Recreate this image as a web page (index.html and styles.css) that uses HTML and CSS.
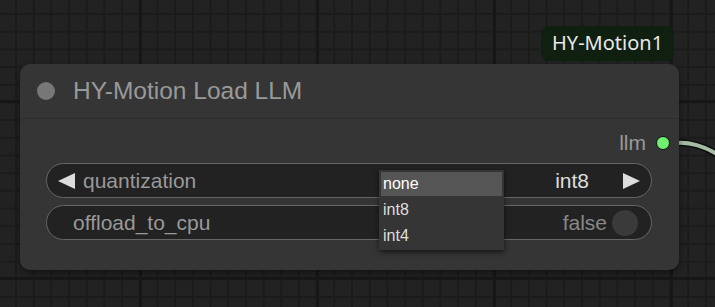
FILE: index.html
```html
<!DOCTYPE html>
<html lang="en">
<head>
    <meta charset="UTF-8">
    <title>HY-Motion Load LLM</title>
    <link rel="stylesheet" href="styles.css">
</head>
<body>

    <div class="canvas">
        <svg class="wire" width="40" height="30" viewBox="0 0 40 30">
            <path d="M0 5 C 14 4, 26 8, 40 16" stroke="#0c0c0c" stroke-width="7" fill="none"/>
            <path d="M0 5 C 14 4, 26 8, 40 16" stroke="#a3bca3" stroke-width="4" fill="none"/>
        </svg>

        <div class="badge">HY-Motion1</div>

        <div class="node">
            <div class="node-title">
                <span class="title-dot"></span>
                <span class="title-text">HY-Motion Load LLM</span>
            </div>
            <div class="node-body">
                <div class="output-row">
                    <span class="output-name">llm</span>
                    <span class="output-dot"></span>
                </div>

                <div class="widget">
                    <span class="arrow arrow-left"></span>
                    <span class="widget-label">quantization</span>
                    <span class="widget-value">int8</span>
                    <span class="arrow arrow-right"></span>
                </div>

                <div class="widget widget-toggle">
                    <span class="widget-label">offload_to_cpu</span>
                    <span class="toggle-value">false</span>
                    <span class="toggle-knob"></span>
                </div>
            </div>
        </div>

        <div class="menu">
            <div class="menu-item active">none</div>
            <div class="menu-item">int8</div>
            <div class="menu-item">int4</div>
        </div>
    </div>

</body>
</html>
```

FILE: styles.css
```css
body {
    margin: 0;
    padding: 0;
    background-color: #222;
    font-family: 'Liberation Sans', Arial, sans-serif;
    overflow: hidden;
}
.canvas {
    position: relative;
    width: 715px;
    height: 307px;
    background-color: #222;
    background-image:
        linear-gradient(90deg, #171717 3px, transparent 3px),
        linear-gradient(0deg, #171717 3px, transparent 3px),
        linear-gradient(90deg, #1b1b1b 2px, transparent 2px),
        linear-gradient(0deg, #1b1b1b 2px, transparent 2px);
    background-size: 177px 177px, 177px 177px, 17.7px 17.7px, 17.7px 17.7px;
    background-position: 139px 0, 0 103px, 15px 0, 0 15px;
}
.wire {
    position: absolute;
    left: 677px;
    top: 138px;
}
.badge {
    position: absolute;
    left: 541px;
    top: 26px;
    height: 35px;
    line-height: 34px;
    padding: 0 11px;
    border-radius: 8px;
    background: #0f1f10;
    color: #e8e8e8;
    font-family: 'Noto Sans', sans-serif;
    font-size: 20px;
}
.node {
    position: absolute;
    left: 20px;
    top: 64px;
    width: 659px;
    height: 206px;
    background: #353535;
    border-radius: 10px;
    box-shadow: 0 3px 6px rgba(0,0,0,0.45);
}
.node-title {
    display: flex;
    align-items: center;
    height: 54px;
    padding-left: 17px;
    border-bottom: 1px solid #2c2c2c;
}
.title-dot {
    width: 18px;
    height: 18px;
    border-radius: 50%;
    background: #777;
    margin-right: 18px;
}
.title-text {
    color: #999;
    font-size: 24.5px;
}
.node-body {
    padding: 12px 27px 0 26px;
}
.output-row {
    display: flex;
    justify-content: flex-end;
    align-items: center;
    height: 24px;
    margin-right: -18px;
    margin-bottom: 8px;
}
.output-name {
    color: #999;
    font-size: 21px;
    margin-right: 10px;
}
.output-dot {
    width: 12px;
    height: 12px;
    border-radius: 50%;
    background: #70f070;
    border: 1.5px solid #111;
}
.widget {
    display: flex;
    align-items: center;
    height: 33px;
    margin-bottom: 7px;
    padding: 0 11px;
    background: #222;
    border: 1.5px solid #666;
    border-radius: 18px;
    font-size: 21px;
}
.widget-label {
    color: #999;
    flex: 1;
}
.widget-value {
    color: #ddd;
    margin-right: 34px;
}
.arrow {
    width: 0;
    height: 0;
    border-top: 8.5px solid transparent;
    border-bottom: 8.5px solid transparent;
}
.arrow-left {
    border-right: 17px solid #ddd;
    margin-right: 8px;
}
.arrow-right {
    border-left: 17px solid #ddd;
}
.widget-toggle {
    padding: 0 13px 0 26px;
}
.toggle-value {
    color: #888;
    margin-right: 5px;
}
.toggle-knob {
    width: 26px;
    height: 26px;
    border-radius: 50%;
    background: #3a3a3a;
}
.menu {
    position: absolute;
    left: 379px;
    top: 170px;
    width: 121px;
    padding: 2px;
    background: #353535;
    box-shadow: 0 2px 5px rgba(0,0,0,0.6);
    font-family: 'Liberation Sans', Arial, sans-serif;
    font-size: 16px;
}
.menu-item {
    height: 24px;
    line-height: 24px;
    margin-bottom: 2px;
    padding-left: 2px;
    color: #ddd;
}
.menu-item:last-child {
    margin-bottom: 0;
}
.menu-item.active {
    background: #555;
    color: #fff;
}
```
